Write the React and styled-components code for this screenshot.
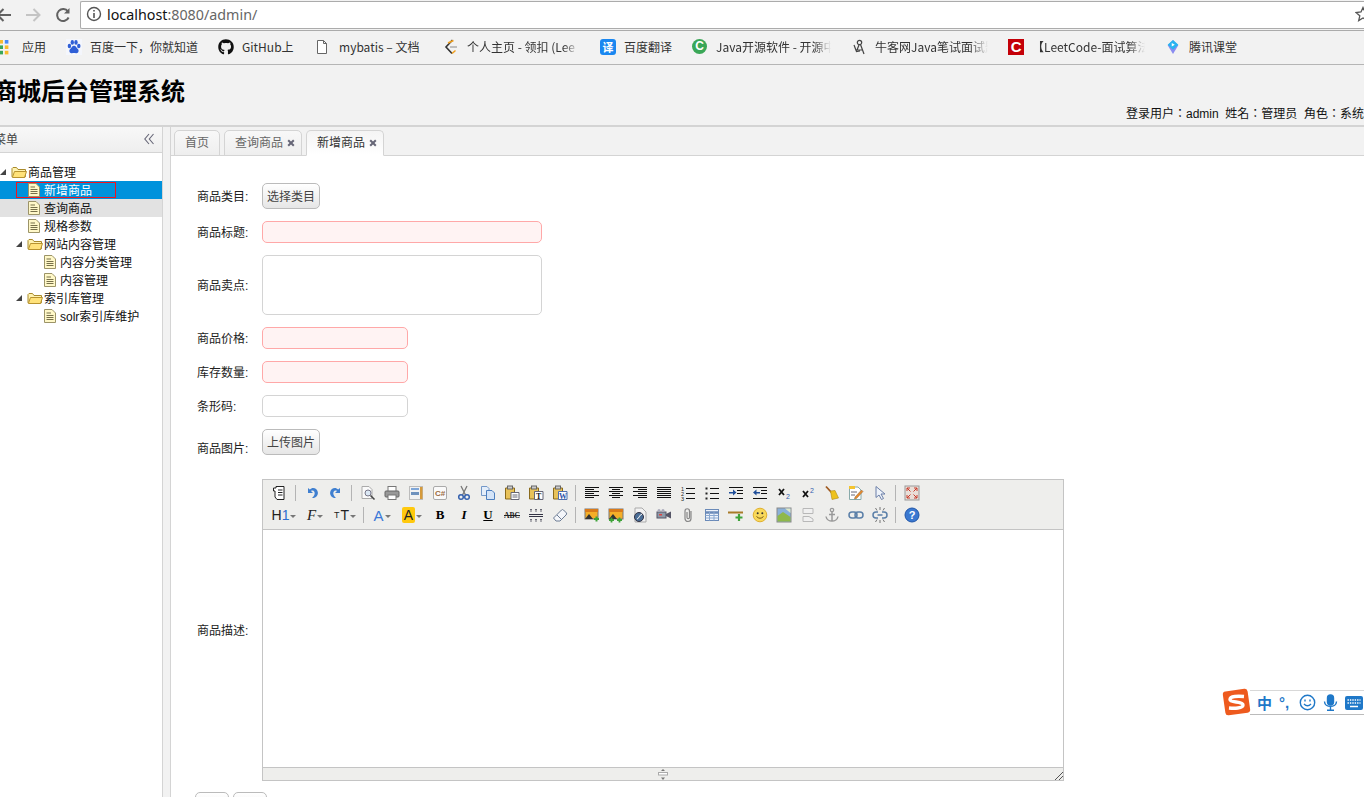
import React from 'react';
import styled, { createGlobalStyle } from 'styled-components';
import { FaGithub } from 'react-icons/fa';

const GlobalStyle = createGlobalStyle`
  html, body {
    margin: 0;
    padding: 0;
    background: #fff;
    overflow: hidden;
  }
  body {
    font-family: "Liberation Sans", "Noto Sans CJK SC", sans-serif;
    font-size: 12px;
    color: #000;
  }
  * { box-sizing: border-box; }
`;

const Page = styled.div`
  position: relative;
  width: 1364px;
  height: 797px;
  overflow: hidden;
  display: flex;
  flex-direction: column;
`;

/* browser chrome */
const NavBar = styled.div`
  height: 30px;
  background: #f2f2f2;
  display: flex;
  align-items: center;
  padding-bottom: 1px;
`;
const NavButton = styled.div`
  width: ${(p) => p.$w}px;
  margin-left: ${(p) => p.$ml || 0}px;
  height: 20px;
  display: flex;
  align-items: center;
  justify-content: center;
  flex: none;
`;
const UrlBox = styled.div`
  flex: 1;
  height: 28px;
  margin-left: 9px;
  margin-top: 1px;
  background: #fff;
  border: 1px solid #ababab;
  border-right: 0;
  border-radius: 2px 0 0 2px;
  display: flex;
  align-items: center;
  padding: 0 0 2px 5px;
  font-family: "Noto Sans", "Liberation Sans", sans-serif;
  font-size: 14.3px;
  color: #666;
`;
const Host = styled.span`
  color: #111;
  margin-left: 5px;
`;
const Star = styled.span`
  margin-left: auto;
  display: flex;
  margin-right: -7px;
`;
const Bookmarks = styled.div`
  height: 35px;
  background: #f2f2f2;
  border-top: 1px solid #ababab;
  border-bottom: 1px solid #b5b5b5;
  display: flex;
  align-items: center;
  gap: 20px;
  margin-left: -7px;
  padding-bottom: 2px;
  white-space: nowrap;
  color: #333;
  font-family: "Noto Sans CJK SC", sans-serif;
`;
const Bookmark = styled.div`
  display: flex;
  align-items: center;
  gap: 8px;
  flex: none;
`;
const BookmarkIcon = styled.span`
  width: ${(p) => p.$w || 16}px;
  height: 16px;
  display: flex;
  align-items: center;
  justify-content: flex-start;
  flex: none;
`;
const BookmarkText = styled.span`
  display: block;
  overflow: hidden;
  width: ${(p) => (p.$w ? `${p.$w}px` : 'auto')};
  ${(p) => p.$fade && `
    -webkit-mask-image: linear-gradient(to right, #000 85%, transparent 100%);
    mask-image: linear-gradient(to right, #000 85%, transparent 100%);
  `}
`;
const TranslateBadge = styled.span`
  width: 16px;
  height: 16px;
  border-radius: 3px;
  background: #1a87f0;
  color: #fff;
  font-size: 11px;
  font-weight: 700;
  line-height: 16px;
  text-align: center;
`;
const RedBadge = styled.span`
  width: 16px;
  height: 16px;
  background: #c40008;
  color: #fff;
  font-family: "Liberation Sans", sans-serif;
  font-size: 15px;
  font-weight: 700;
  line-height: 16px;
  text-align: center;
`;
const GreenBadge = styled.span`
  width: 15px;
  height: 15px;
  border-radius: 50%;
  background: #3aa757;
  color: #fff;
  font-family: "Liberation Sans", sans-serif;
  font-size: 12px;
  font-weight: 700;
  line-height: 15px;
  text-align: center;
`;

/* system header */
const Header = styled.header`
  height: 60px;
  background: #f2f2f2;
  flex: none;
`;
const Title = styled.h1`
  margin: 0 0 0 -7px;
  padding-top: 8px;
  font-size: 24px;
  line-height: 34px;
  font-weight: 700;
  color: #000;
  font-family: "Noto Sans CJK SC", sans-serif;
`;
const UserInfo = styled.div`
  margin: -1px 0 0 1126px;
  white-space: nowrap;
  line-height: 16px;
  color: #111;
  font-family: "Liberation Sans", "Noto Sans CJK TC", sans-serif;
`;

/* body */
const Body = styled.div`
  flex: 1;
  min-height: 0;
  display: flex;
  background: #f2f2f2;
  border-top: 2px solid #d4d4d4;
`;
const Side = styled.aside`
  width: 163px;
  flex: none;
  background: #fff;
  border-right: 1px solid #d4d4d4;
  overflow: hidden;
`;
const SideHead = styled.div`
  height: 26px;
  background: linear-gradient(#f8f8f8, #eee);
  border-bottom: 1px solid #d4d4d4;
  display: flex;
  align-items: center;
  justify-content: space-between;
  margin-left: -6px;
  padding: 0 8px 2px 0;
  color: #444;
`;
const Tree = styled.ul`
  list-style: none;
  margin: 0;
  padding: 10px 0 0;
`;
const TreeRow = styled.li`
  position: relative;
  height: 18px;
  display: flex;
  align-items: center;
  padding-left: ${(p) => p.$level * 16}px;
  line-height: 18px;
  white-space: nowrap;
  background: ${(p) => (p.$selected ? '#0092dc' : p.$hover ? '#e2e2e2' : 'transparent')};
  color: ${(p) => (p.$selected ? '#fff' : '#111')};
`;
const TreeArrow = styled.span`
  width: 11px;
  height: 16px;
  flex: none;
  display: flex;
  align-items: center;
`;
const TreeIcon = styled.span`
  width: 17px;
  height: 16px;
  flex: none;
  display: flex;
  align-items: center;
  padding-left: ${(p) => (p.$leaf ? 1 : 0)}px;
`;
const TreeText = styled.span`
  margin-top: 2px;
`;
const RedMark = styled.span`
  position: absolute;
  left: 16px;
  top: 1px;
  width: 100px;
  height: 16px;
  border: 1px solid #f0141e;
`;
const Main = styled.main`
  margin-left: 7px;
  flex: 1;
  min-width: 0;
  display: flex;
  flex-direction: column;
  border-left: 1px solid #d4d4d4;
`;
const TabBar = styled.div`
  height: 29px;
  flex: none;
  border-bottom: 1px solid #d4d4d4;
  display: flex;
  align-items: flex-end;
  gap: 4px;
  padding-left: 3px;
`;
const Tab = styled.div`
  height: 26px;
  margin-bottom: -1px;
  padding: 0 ${(p) => (p.$closable ? 6 : 10)}px 3px 10px;
  display: flex;
  align-items: center;
  gap: 4px;
  border: 1px solid #d4d4d4;
  border-radius: 5px 5px 0 0;
  background: ${(p) => (p.$active ? 'linear-gradient(#f4f4f4, #fff)' : 'linear-gradient(#f8f8f8, #eee)')};
  border-bottom-color: ${(p) => (p.$active ? '#fff' : '#d4d4d4')};
  color: ${(p) => (p.$active ? '#333' : '#666')};
`;
const Close = styled.span`
  width: 8px;
  display: flex;
  margin-top: 2px;
`;
const Content = styled.div`
  flex: 1;
  background: #fff;
  padding: 27px 0 0 26px;
  overflow: hidden;
`;
const Form = styled.form`
  display: flex;
  flex-direction: column;
  gap: 12px;
`;
const Row = styled.div`
  display: flex;
  align-items: ${(p) => p.$align || 'center'};
  margin-top: ${(p) => p.$mt || 0}px;
`;
const Label = styled.label`
  width: 65px;
  flex: none;
  color: #222;
  line-height: 16px;
  padding-top: ${(p) => p.$pt || 2}px;
`;
const Button = styled.button`
  height: 26px;
  padding: 0 4px 2px;
  border: 1px solid #bbb;
  border-radius: 5px;
  background: linear-gradient(#fff, #e6e6e6);
  font: inherit;
  color: #444;
`;
const Input = styled.div`
  width: ${(p) => p.$w}px;
  height: ${(p) => p.$h || 22}px;
  border: 1px solid ${(p) => (p.$invalid ? '#ffa8a8' : '#d4d4d4')};
  background: ${(p) => (p.$invalid ? '#fff3f3' : '#fff')};
  border-radius: 5px;
`;
const Editor = styled.div`
  width: 802px;
  height: 302px;
  border: 1px solid #c4c4c4;
  display: flex;
  flex-direction: column;
`;
const EditorTools = styled.div`
  height: 50px;
  flex: none;
  background: #eeeeec;
  border-bottom: 1px solid #c4c4c4;
  padding: 2px 0 0 5px;
  display: flex;
  flex-direction: column;
`;
const ToolRow = styled.div`
  height: 22px;
  display: flex;
  align-items: center;
`;
const Tool = styled.span`
  width: ${(p) => p.$w || 24}px;
  height: 22px;
  flex: none;
  display: flex;
  align-items: center;
  justify-content: center;
  gap: 1px;
  color: #222;
`;
const Sep = styled.span`
  width: 8px;
  height: 16px;
  flex: none;
  background: linear-gradient(#b4b4b4, #b4b4b4) 3px 0 / 1px 100% no-repeat;
`;
const Caret = styled.i`
  width: 0;
  height: 0;
  margin-top: 2px;
  border: 3px solid transparent;
  border-top: 3px solid #777;
  border-bottom: 0;
`;
const Glyph = styled.span`
  font-family: ${(p) => (p.$serif ? '"Liberation Serif", serif' : '"Liberation Sans", sans-serif')};
  font-size: ${(p) => p.$size || 14}px;
  font-weight: ${(p) => (p.$bold ? 700 : 400)};
  font-style: ${(p) => (p.$italic ? 'italic' : 'normal')};
  text-decoration: ${(p) => (p.$under ? 'underline' : 'none')};
  color: ${(p) => p.$color || '#222'};
  background: ${(p) => p.$bg || 'none'};
  border-radius: 2px;
  padding: ${(p) => (p.$bg ? '0 2px' : '0')};
  line-height: ${(p) => (p.$bg ? '16px' : 'normal')};
  white-space: nowrap;
`;
const EditArea = styled.div`
  flex: 1;
  background: #fff;
`;
const EditorFoot = styled.div`
  height: 13px;
  flex: none;
  background: #eeeeec;
  border-top: 1px solid #c4c4c4;
  position: relative;
  display: flex;
  justify-content: center;
  align-items: center;
`;
const ResizeCorner = styled.span`
  position: absolute;
  right: 0;
  bottom: 0;
  display: flex;
`;
const BottomButtons = styled.div`
  display: flex;
  gap: 4px;
  margin: -1px 0 0 -2px;
`;
const GhostButton = styled.button`
  width: 34px;
  height: 26px;
  border: 1px solid #bbb;
  border-radius: 5px;
  background: linear-gradient(#fff, #e6e6e6);
  padding: 0;
`;

/* input method widget, floats over the page */
const Ime = styled.div`
  position: absolute;
  right: 0;
  top: 688px;
  width: 142px;
  height: 28px;
`;
const ImeBar = styled.div`
  position: absolute;
  left: 28px;
  right: 0;
  top: 2px;
  height: 25px;
  background: #fff;
  border-top: 1px solid #d8d8d8;
  border-bottom: 1px solid #bbb;
  display: flex;
  align-items: center;
  padding-left: 7px;
  color: #1f78c8;
`;
const ImeChar = styled.span`
  font-family: "Noto Sans CJK SC", sans-serif;
  font-size: 15px;
  font-weight: 700;
  width: 22px;
`;
const ImePunct = styled.span`
  width: 20px;
  display: flex;
  font-size: 15px;
  font-weight: 700;
`;
const ImeGap = styled.span`
  width: 7px;
  flex: none;
`;
const ImeLogo = styled.span`
  position: absolute;
  left: 0;
  top: 0;
  display: flex;
`;

/* tree and chrome icons */
const FolderOpen = () => (
  <svg width="16" height="14" viewBox="0 0 16 14">
    <path d="M1 3.5 V11.5 Q1 12.5 2 12.5 H13 Q14.5 12.5 14.5 11 V4.5 H7 L5.5 2.5 H2 Z" fill="#fff3b0" stroke="#a98a2c" />
    <path d="M1.5 12 L3.5 6.5 H15.5 L13.5 12.5 H2 Z" fill="#ffe27a" stroke="#b8932f" />
  </svg>
);
const FileIcon = () => (
  <svg width="12" height="14" viewBox="0 0 12 14">
    <path d="M.5 .5 H8 L11.5 4 V13.5 H.5 Z" fill="#fff8c8" stroke="#9c9468" />
    <path d="M2.5 4 H7 M2.5 6.5 H9.5 M2.5 8.5 H9.5 M2.5 10.5 H9.5" stroke="#77704a" />
  </svg>
);
const Expander = () => (
  <svg width="6" height="6" viewBox="0 0 6 6">
    <path d="M0 6 L6 0 V6 Z" fill="#444" />
  </svg>
);
const Collapse = () => (
  <svg width="10" height="12" viewBox="0 0 10 12" fill="none" stroke="#667" strokeWidth="1.1">
    <path d="M5 1 L.8 6 L5 11 M9.5 1 L5.3 6 L9.5 11" />
  </svg>
);
const Back = () => (
  <svg width="20" height="16" viewBox="0 0 20 16" fill="none" stroke="#616161" strokeWidth="2">
    <path d="M16 8 H3 M8.5 2 L2.5 8 L8.5 14" />
  </svg>
);
const Forward = () => (
  <svg width="20" height="16" viewBox="0 0 20 16" fill="none" stroke="#c4c4c4" strokeWidth="2">
    <path d="M3 8 H16 M10.5 2 L16.5 8 L10.5 14" />
  </svg>
);
const Reload = () => (
  <svg width="16" height="16" viewBox="0 0 16 16" fill="none" stroke="#616161" strokeWidth="2">
    <path d="M13.6 10.5 A6 6 0 1 1 13 4.5" />
    <path d="M14.5 1 V6.5 H9 Z" fill="#616161" stroke="none" />
  </svg>
);
const InfoIcon = () => (
  <svg width="16" height="16" viewBox="0 0 16 16" fill="none" stroke="#555" strokeWidth="1.4">
    <circle cx="8" cy="8" r="6.5" />
    <path d="M8 7 V12 M8 4 V5.6" strokeWidth="1.6" />
  </svg>
);
const StarIcon = () => (
  <svg width="16" height="16" viewBox="0 0 16 16" fill="none" stroke="#555" strokeWidth="1.3">
    <path d="M8 1.5 L10 6 L15 6.5 L11.2 9.8 L12.3 14.6 L8 12 L3.7 14.6 L4.8 9.8 L1 6.5 L6 6 Z" />
  </svg>
);
const AppsIcon = () => {
  const colors = ['#e8453c', '#f9bb2d', '#4a8af4', '#e8453c', '#3aa757', '#f9bb2d', '#4a8af4', '#3aa757', '#f9bb2d'];
  return (
    <svg width="16" height="16" viewBox="0 0 16 16">
      {colors.map((c, i) => (
        <rect key={i} x={1 + (i % 3) * 5.4} y={1 + Math.floor(i / 3) * 5.4} width="3.6" height="3.6" fill={c} />
      ))}
    </svg>
  );
};
const BaiduIcon = () => (
  <svg width="16" height="16" viewBox="0 0 16 16" fill="#2f5fd6">
    <rect width="16" height="16" fill="#f4f6fc" />
    <ellipse cx="3.4" cy="7" rx="1.7" ry="2.2" />
    <ellipse cx="6.3" cy="3.4" rx="1.7" ry="2.3" />
    <ellipse cx="10" cy="3.4" rx="1.7" ry="2.3" />
    <ellipse cx="12.8" cy="7" rx="1.7" ry="2.2" />
    <path d="M8 6.8 C6 6.8 5.6 9 4.2 10 C2.6 11.2 3.4 14.6 6 14.2 C7.2 14 8.8 14 10 14.2 C12.6 14.6 13.4 11.2 11.8 10 C10.4 9 10 6.8 8 6.8 Z" />
  </svg>
);
const PageIcon = () => (
  <svg width="14" height="16" viewBox="0 0 14 16" fill="#fff" stroke="#666">
    <path d="M2.5 1.5 H8.5 L11.5 4.5 V14.5 H2.5 Z M8.5 1.5 V4.5 H11.5" />
  </svg>
);
const LeetIcon = () => (
  <svg width="16" height="16" viewBox="0 0 16 16" fill="none">
    <path d="M9.5 1 L3 8 L9 14.5" stroke="#333" strokeWidth="1.6" />
    <path d="M5 4 L10.5 1.5" stroke="#f0a020" strokeWidth="1.6" />
    <path d="M7 8 H14" stroke="#b0b0b0" strokeWidth="1.6" />
    <path d="M9 14.5 L12.5 11.5" stroke="#f0a020" strokeWidth="1.6" />
  </svg>
);
const NowcoderIcon = () => (
  <svg width="16" height="16" viewBox="0 0 16 16" fill="none" stroke="#444" strokeWidth="1.2">
    <circle cx="8.5" cy="3.5" r="2.2" />
    <path d="M9.5 5.5 L13 15 M8 6 L6 11 H11 M3 6 L5.5 12.5 L9 12" />
  </svg>
);
const TencentIcon = () => (
  <svg width="18" height="18" viewBox="0 0 18 18">
    <path d="M9 1 L15 7 L9 17 L3 7 Z" fill="#8a8cf0" />
    <path d="M9 1 L15 6.5 L9 12 L3 6.5 Z" fill="#28b4f0" />
    <path d="M7.6 4.5 L11 6.5 L7.6 8.5 Z" fill="#fff" />
  </svg>
);
const SogouLogo = () => (
  <svg width="30" height="28" viewBox="0 0 30 28">
    <rect x="2" y="2" width="25" height="24" rx="3" fill="#ee5a1e" transform="rotate(-8 15 14)" />
    <path d="M22 8.5 C16 8 8 8 8 11.5 C8 15 21 13 21 17 C21 20.5 12 20.5 7 20" fill="none" stroke="#fff" strokeWidth="3.4" />
  </svg>
);
const SmileOutline = () => (
  <svg width="17" height="17" viewBox="0 0 17 17" fill="none" stroke="#1f78c8" strokeWidth="1.4">
    <circle cx="8.5" cy="8.5" r="7.2" />
    <path d="M5 10 Q8.5 13.5 12 10" />
    <path d="M6 5.5 V7.5 M11 5.5 V7.5" />
  </svg>
);
const Mic = () => (
  <svg width="15" height="17" viewBox="0 0 15 17" fill="none" stroke="#1f78c8" strokeWidth="1.4">
    <rect x="4.5" y="1" width="6" height="10" rx="3" fill="#1f78c8" />
    <path d="M1.5 7.5 C1.5 14 13.5 14 13.5 7.5 M7.5 12 V16 M4 16.2 H11" />
  </svg>
);
const KeyboardIcon = () => (
  <svg width="18" height="14" viewBox="0 0 18 14">
    <rect width="18" height="14" rx="2" fill="#1f78c8" />
    <path d="M2.5 4 H15.5 M2.5 7 H15.5" stroke="#fff" strokeWidth="1.5" strokeDasharray="1.4 1" />
    <path d="M5 10.5 H13" stroke="#fff" strokeWidth="1.5" />
  </svg>
);
const CloseIcon = () => (
  <svg width="8" height="8" viewBox="0 0 8 8" stroke="#667" strokeWidth="2">
    <path d="M1.2 1.2 L6.8 6.8 M6.8 1.2 L1.2 6.8" />
  </svg>
);

/* editor toolbar icons */
const Ico = ({ children }) => (
  <svg width="16" height="16" viewBox="0 0 16 16" fill="none">{children}</svg>
);
const lines = (rows) => rows.map(([x1, x2, y], i) => (
  <path key={i} d={`M${x1} ${y + 0.5} H${x2}`} stroke="#111" />
));
const alignRows = {
  left: [[1, 15, 2], [1, 10, 4], [1, 15, 6], [1, 10, 8], [1, 15, 10], [1, 10, 12]],
  center: [[1, 15, 2], [4, 12, 4], [1, 15, 6], [4, 12, 8], [1, 15, 10], [4, 12, 12]],
  right: [[1, 15, 2], [6, 15, 4], [1, 15, 6], [6, 15, 8], [1, 15, 10], [6, 15, 12]],
  justify: [2, 4, 6, 8, 10, 12].map((y) => [1, 15, y]),
};
const Clip = ({ children }) => (
  <>
    <path d="M1.5 3 H10.5 V14 H1.5 Z" fill="#e8c25a" stroke="#8a6a1c" />
    <rect x="3.5" y="1" width="5" height="3" fill="#ccc" stroke="#666" />
    {children}
  </>
);
const icons = {
  source: <Ico><path d="M4 1.5 H12 V14.5 H5 L3 12 V6 H1.5 V3 H4 Z" fill="#fff" stroke="#222" /><path d="M6 5 H10.5 M6 7.5 H10.5 M6 10 H10.5" stroke="#222" /></Ico>,
  undo: <Ico><path d="M4 3 V8 H9 L7 6 C9 4.5 11.5 6.5 10.5 9.5 C10 11 9 12 8 13 C11.5 13.5 14.5 10.5 13.8 7 C13 3 8.5 1.5 5.8 4.5 Z" fill="#3f7fd0" /></Ico>,
  redo: <Ico><path d="M12 3 V8 H7 L9 6 C7 4.5 4.5 6.5 5.5 9.5 C6 11 7 12 8 13 C4.5 13.5 1.5 10.5 2.2 7 C3 3 7.5 1.5 10.2 4.5 Z" fill="#3f7fd0" /></Ico>,
  preview: <Ico><path d="M2 1.5 H9 L12 4.5 V13.5 H2 Z" fill="#fafafa" stroke="#aaa" /><circle cx="8" cy="8" r="3" fill="#dbe8f5" stroke="#778" /><path d="M10.5 10.5 L14.5 14.5" stroke="#444" strokeWidth="1.6" /></Ico>,
  print: <Ico><rect x="4" y="1.5" width="8" height="5" fill="#fff" stroke="#777" /><rect x="1" y="6" width="14" height="6" rx="1" fill="#999" stroke="#666" /><rect x="4" y="10" width="8" height="4.5" fill="#fff" stroke="#777" /></Ico>,
  template: <Ico><rect x="1.5" y="1.5" width="13" height="13" fill="#f2f2f2" stroke="#888" strokeDasharray="1 1" /><rect x="3" y="3" width="8" height="2" fill="#7ea6d8" /><rect x="3" y="7" width="8" height="3" fill="#6f92bd" /><rect x="12" y="2" width="2.5" height="12" fill="#d59a3a" /></Ico>,
  code: <Ico><rect x="1.5" y="1.5" width="13" height="13" rx="1.5" fill="#fafafa" stroke="#aaa" /><text x="3" y="11" fontSize="8" fontWeight="700" fontFamily="Liberation Sans" fill="#9a6a3c">C#</text></Ico>,
  cut: <Ico><path d="M5 1 L9.5 10 M11 1 L6.5 10" stroke="#777" strokeWidth="1.3" /><circle cx="5" cy="12" r="2.3" stroke="#3561ae" strokeWidth="1.5" /><circle cx="11" cy="12" r="2.3" stroke="#3561ae" strokeWidth="1.5" /></Ico>,
  copy: <Ico><path d="M1.5 1.5 H7 L9 3.5 V10.5 H1.5 Z" fill="#e4eefa" stroke="#7498c8" /><path d="M6.5 5.5 H12 L14.5 8 V14.5 H6.5 Z" fill="#d4e4f8" stroke="#4d7fbf" /></Ico>,
  paste: <Ico><Clip><path d="M7 7.5 H15 V14.5 H7 Z" fill="#fff" stroke="#667" /><path d="M8.5 10 H13.5 M8.5 12 H13.5" stroke="#667" /></Clip></Ico>,
  pasteText: <Ico><Clip><path d="M6.5 6.5 H15 V14.5 H6.5 Z" fill="#fff" stroke="#667" /><text x="8" y="13.5" fontSize="8" fontWeight="700" fontFamily="Liberation Serif" fill="#222">T</text></Clip></Ico>,
  pasteWord: <Ico><Clip><path d="M6.5 6.5 H15 V14.5 H6.5 Z" fill="#fff" stroke="#4f6fb0" /><text x="7" y="13.5" fontSize="8" fontWeight="700" fontFamily="Liberation Serif" fill="#2f55a8">W</text></Clip></Ico>,
  left: <Ico>{lines(alignRows.left)}</Ico>,
  center: <Ico>{lines(alignRows.center)}</Ico>,
  right: <Ico>{lines(alignRows.right)}</Ico>,
  justify: <Ico>{lines(alignRows.justify)}</Ico>,
  ol: <Ico>{lines([[6, 15, 3], [6, 15, 8], [6, 15, 13]])}<text x="1" y="6" fontSize="5.5" fontFamily="Liberation Sans" fill="#222">1</text><text x="1" y="10.5" fontSize="5.5" fontFamily="Liberation Sans" fill="#222">2</text><text x="1" y="15.5" fontSize="5.5" fontFamily="Liberation Sans" fill="#222">3</text></Ico>,
  ul: <Ico>{lines([[6, 15, 3], [6, 15, 8], [6, 15, 13]])}<rect x="1.5" y="2.5" width="2" height="2" fill="#222" /><rect x="1.5" y="7.5" width="2" height="2" fill="#222" /><rect x="1.5" y="12.5" width="2" height="2" fill="#222" /></Ico>,
  indent: <Ico>{lines([[1, 15, 2], [9, 15, 5], [9, 15, 8], [1, 15, 13]])}<path d="M1 7 H5 V4.5 L8.5 7.5 L5 10.5 V8.5 H1 Z" fill="#1f4e99" /></Ico>,
  outdent: <Ico>{lines([[1, 15, 2], [9, 15, 5], [9, 15, 8], [1, 15, 13]])}<path d="M8 7 H4.5 V4.5 L1 7.5 L4.5 10.5 V8.5 H8 Z" fill="#1f4e99" /></Ico>,
  sub: <Ico><path d="M3 4 L8 10 M8 4 L3 10" stroke="#111" strokeWidth="1.8" /><text x="10" y="14" fontSize="7" fontFamily="Liberation Sans" fill="#3561ae">2</text></Ico>,
  sup: <Ico><path d="M3 6 L8 12 M8 6 L3 12" stroke="#111" strokeWidth="1.8" /><text x="10" y="8" fontSize="7" fontFamily="Liberation Sans" fill="#3561ae">2</text></Ico>,
  broom: <Ico><path d="M2 1.5 L7.5 7.5" stroke="#a05a20" strokeWidth="1.8" /><path d="M6.5 6 L11 5.5 L14.5 13 L8 14.5 Z" fill="#eec21c" stroke="#b08a10" strokeWidth=".6" /></Ico>,
  typeset: <Ico><path d="M1.5 2 H10 L13 5 V14.5 H1.5 Z" fill="#fff" stroke="#8aa" /><path d="M1 1 H7 V4 H1 Z" fill="#f4c430" /><path d="M3 7 H9 M3 10 H7" stroke="#667" /><path d="M7 12 L13.5 5 L15 6.5 L8.5 13.5 L6.5 14 Z" fill="#e88a2a" stroke="#864" strokeWidth=".5" /></Ico>,
  select: <Ico><path d="M4 1.5 V12.5 L7 10 L9.5 14.5 L11.5 13.5 L9 9 H13 Z" fill="#eef3fa" stroke="#6b7fa8" /></Ico>,
  fullscreen: <Ico><rect x="1" y="1" width="14" height="14" fill="#eadfd8" stroke="#999" /><path d="M3 3 L6.5 6.5 M3 3 H6 M3 3 V6 M13 3 L9.5 6.5 M13 3 H10 M13 3 V6 M3 13 L6.5 9.5 M3 13 H6 M3 13 V10 M13 13 L9.5 9.5 M13 13 H10 M13 13 V10" stroke="#c83a2a" /></Ico>,
  strike: <Ico><text x="0" y="11" fontSize="7.5" fontFamily="Liberation Serif" fontWeight="700" fill="#222">ABC</text><path d="M0 8.5 H16" stroke="#222" /></Ico>,
  hrDots: <Ico><path d="M1 7.5 H15 M1 9.5 H15" stroke="#334" /><path d="M3 2 V5 M8 2 V5 M13 2 V5 M3 12 V15 M8 12 V15 M13 12 V15" stroke="#334" strokeWidth="1.4" strokeDasharray="1 .5" /></Ico>,
  eraser: <Ico><path d="M1.5 11 L9.5 3 Q10.5 2 11.5 3 L14.5 6 Q15 7 14 8 L8 14 H4 Z" fill="#f4f6fa" stroke="#6c7c94" /><path d="M5 8 L10 13" stroke="#6c7c94" /></Ico>,
  image: <Ico><rect x="1" y="2" width="13" height="10" fill="#f5ae28" stroke="#777" /><rect x="1" y="2" width="13" height="3" fill="#d97a1a" /><path d="M1 12 L5 7 L9 12 Z" fill="#333" /><path d="M10 12 H15 M12.5 9.5 V14.5" stroke="#3fa33a" strokeWidth="2" /></Ico>,
  images: <Ico><rect x="1" y="2" width="14" height="10" fill="#f5ae28" stroke="#777" /><rect x="1" y="2" width="14" height="3" fill="#d97a1a" /><path d="M1 12 L5 7 L9 12 Z" fill="#333" /><path d="M1 13 H6 M3.5 10.5 V15.5 M9 13 H14 M11.5 10.5 V15.5" stroke="#3fa33a" strokeWidth="1.8" /></Ico>,
  flash: <Ico><path d="M3 1 H10 L14 5 V15 H3 Z" fill="#f2f2f2" stroke="#aaa" /><circle cx="7" cy="10" r="4.5" fill="#4a6e96" stroke="#334" /><path d="M5 12 C7 12 7 8 10 7" stroke="#fff" /></Ico>,
  video: <Ico><rect x="1" y="5" width="9" height="6" fill="#8e9aa8" stroke="#556" /><circle cx="3" cy="3.5" r="1.5" fill="#aab" /><circle cx="7" cy="3.5" r="1.5" fill="#aab" /><path d="M10 7 L15 4.5 V11.5 L10 9 Z" fill="#556" /><rect x="3" y="7" width="3" height="1.5" fill="#d44" /></Ico>,
  attach: <Ico><path d="M11 4 V11.5 C11 15.5 5 15.5 5 11.5 V4 C5 1 9.5 1 9.5 4 V10.5 C9.5 12 7 12 7 10.5 V5" stroke="#888" strokeWidth="1.2" /></Ico>,
  table: <Ico><rect x="1.5" y="2.5" width="13" height="11" fill="#eef3fb" stroke="#6a8ab8" /><path d="M1.5 5.5 H14.5" stroke="#6a8ab8" strokeWidth="2.5" /><path d="M1.5 8.5 H14.5 M1.5 11 H14.5 M5.5 5 V13.5 M10 5 V13.5" stroke="#8aa8d0" /></Ico>,
  hr: <Ico><path d="M0 5.5 H15" stroke="#a87a28" strokeWidth="2" /><path d="M7.5 10.5 H14.5 M11 7 V14" stroke="#3fa33a" strokeWidth="2.2" /></Ico>,
  emoji: <Ico><circle cx="8" cy="8" r="6.8" fill="#f8d85a" stroke="#e0b030" /><circle cx="5.7" cy="6.2" r="1" fill="#333" /><circle cx="10.3" cy="6.2" r="1" fill="#333" /><path d="M4.5 9.5 Q8 13 11.5 9.5" stroke="#7a5a10" /></Ico>,
  map: <Ico><rect x="1" y="1" width="14" height="14" fill="#8ab0d8" stroke="#888" /><path d="M1.5 14.5 V9 L7 5 L14.5 10 V14.5 Z" fill="#8fb84a" /><path d="M9 1.5 H14.5 V6 Z" fill="#dfe8c8" /></Ico>,
  pagebreak: <Ico><path d="M3 1.5 H13 V6.5 H3 Z M3 9.5 H9 L13 12 V14.5 H3 Z" fill="#f0f0f0" stroke="#b8b8b8" /></Ico>,
  anchor: <Ico><circle cx="8" cy="3" r="1.7" stroke="#999" strokeWidth="1.2" /><path d="M8 5 V14 M5 7.5 H11 M2 9.5 C2.5 12.5 5.5 14 8 14 C10.5 14 13.5 12.5 14 9.5" stroke="#999" strokeWidth="1.5" /></Ico>,
  link: <Ico><rect x="1" y="5" width="8" height="6" rx="3" stroke="#5a7fa8" strokeWidth="1.5" /><rect x="7" y="5" width="8" height="6" rx="3" stroke="#5a7fa8" strokeWidth="1.5" /></Ico>,
  unlink: <Ico><path d="M6 5 H4 A3 3 0 0 0 4 11 H6 M10 5 H12 A3 3 0 0 1 12 11 H10 M5.5 8 H10.5" stroke="#5a7fa8" strokeWidth="1.5" /><path d="M8 0 V3 M8 13 V16 M3.5 1 L5 3.5 M12.5 1 L11 3.5 M3.5 15 L5 12.5 M12.5 15 L11 12.5" stroke="#777" /></Ico>,
  help: <Ico><circle cx="8" cy="8" r="7" fill="#3a78d0" stroke="#1f55a8" /><text x="4.8" y="12" fontSize="11" fontWeight="700" fontFamily="Liberation Sans" fill="#fff">?</text></Ico>,
};

const group = (names) => names.map((n) => <Tool key={n}>{icons[n]}</Tool>);

const bookmarks = [
  { icon: <AppsIcon />, iconW: 21, text: '应用' },
  { icon: <BaiduIcon />, text: '百度一下，你就知道' },
  { icon: <FaGithub size={16} color="#111" />, text: 'GitHub上', w: 53 },
  { icon: <PageIcon />, text: 'mybatis – 文档', w: 84 },
  { icon: <LeetIcon />, text: '个人主页 - 领扣 (Lee', w: 113, fade: true },
  { icon: <TranslateBadge>译</TranslateBadge>, text: '百度翻译' },
  { icon: <GreenBadge>C</GreenBadge>, text: 'Java开源软件 - 开源中', w: 115, fade: true },
  { icon: <NowcoderIcon />, text: '牛客网Java笔试面试题', w: 113, fade: true },
  { icon: <RedBadge>C</RedBadge>, text: '【LeetCode-面试算法', w: 113, fade: true },
  { icon: <TencentIcon />, text: '腾讯课堂' },
];

const menu = [
  { level: 0, text: '商品管理', folder: true },
  { level: 1, text: '新增商品', selected: true },
  { level: 1, text: '查询商品', hover: true },
  { level: 1, text: '规格参数' },
  { level: 1, text: '网站内容管理', folder: true },
  { level: 2, text: '内容分类管理' },
  { level: 2, text: '内容管理' },
  { level: 1, text: '索引库管理', folder: true },
  { level: 2, text: 'solr索引库维护' },
];

const App = () => (
  <Page>
    <GlobalStyle />
    <NavBar>
      <NavButton $w={20} $ml={-5}><Back /></NavButton>
      <NavButton $w={20} $ml={8}><Forward /></NavButton>
      <NavButton $w={16} $ml={12}><Reload /></NavButton>
      <UrlBox>
        <InfoIcon />
        <Host>localhost</Host>:8080/admin/
        <Star><StarIcon /></Star>
      </UrlBox>
    </NavBar>
    <Bookmarks>
      {bookmarks.map((b) => (
        <Bookmark key={b.text}>
          <BookmarkIcon $w={b.iconW}>{b.icon}</BookmarkIcon>
          <BookmarkText $w={b.w} $fade={b.fade}>{b.text}</BookmarkText>
        </Bookmark>
      ))}
    </Bookmarks>
    <Header>
      <Title>商城后台管理系统</Title>
      <UserInfo>登录用户：admin&nbsp;&nbsp;姓名：管理员&nbsp;&nbsp;角色：系统</UserInfo>
    </Header>
    <Body>
      <Side>
        <SideHead>
          <span>菜单</span>
          <Collapse />
        </SideHead>
        <Tree>
          {menu.map((m) => (
            <TreeRow key={m.text} $level={m.level} $selected={m.selected} $hover={m.hover}>
              <TreeArrow>{m.folder && <Expander />}</TreeArrow>
              <TreeIcon $leaf={!m.folder}>{m.folder ? <FolderOpen /> : <FileIcon />}</TreeIcon>
              <TreeText>{m.text}</TreeText>
              {m.selected && <RedMark />}
            </TreeRow>
          ))}
        </Tree>
      </Side>
      <Main>
        <TabBar>
          <Tab>首页</Tab>
          <Tab $closable>查询商品<Close><CloseIcon /></Close></Tab>
          <Tab $closable $active>新增商品<Close><CloseIcon /></Close></Tab>
        </TabBar>
        <Content>
          <Form>
            <Row>
              <Label>商品类目:</Label>
              <Button type="button">选择类目</Button>
            </Row>
            <Row>
              <Label>商品标题:</Label>
              <Input $w={280} $invalid />
            </Row>
            <Row>
              <Label>商品卖点:</Label>
              <Input $w={280} $h={60} />
            </Row>
            <Row>
              <Label>商品价格:</Label>
              <Input $w={146} $invalid />
            </Row>
            <Row>
              <Label>库存数量:</Label>
              <Input $w={146} $invalid />
            </Row>
            <Row>
              <Label>条形码:</Label>
              <Input $w={146} />
            </Row>
            <Row $align="flex-start">
              <Label $pt={12}>商品图片:</Label>
              <Button type="button">上传图片</Button>
            </Row>
            <Row $mt={10}>
              <Label>商品描述:</Label>
              <Editor>
                <EditorTools>
                  <ToolRow>
                    {group(['source'])}
                    <Sep />
                    {group(['undo', 'redo'])}
                    <Sep />
                    {group(['preview', 'print', 'template', 'code', 'cut', 'copy', 'paste', 'pasteText', 'pasteWord'])}
                    <Sep />
                    {group(['left', 'center', 'right', 'justify', 'ol', 'ul', 'indent', 'outdent', 'sub', 'sup', 'broom', 'typeset', 'select'])}
                    <Sep />
                    {group(['fullscreen'])}
                  </ToolRow>
                  <ToolRow>
                    <Tool $w={32}><Glyph $size={14}>H<Glyph $size={14} $color="#2f6fd0">1</Glyph></Glyph><Caret /></Tool>
                    <Tool $w={30}><Glyph $serif $italic $size={15}>F</Glyph><Caret /></Tool>
                    <Tool $w={30}><Glyph $size={9}>T</Glyph><Glyph $size={14}>T</Glyph><Caret /></Tool>
                    <Sep />
                    <Tool $w={28}><Glyph $size={15} $color="#3a78d8">A</Glyph><Caret /></Tool>
                    <Tool $w={32}><Glyph $size={14} $bg="#ffc90e">A</Glyph><Caret /></Tool>
                    <Tool><Glyph $serif $bold $size={13} $color="#000">B</Glyph></Tool>
                    <Tool><Glyph $serif $bold $italic $size={13} $color="#000">I</Glyph></Tool>
                    <Tool><Glyph $serif $bold $under $size={13} $color="#000">U</Glyph></Tool>
                    <Tool>{icons.strike}</Tool>
                    <Tool>{icons.hrDots}</Tool>
                    <Tool>{icons.eraser}</Tool>
                    <Sep />
                    {group(['image', 'images', 'flash', 'video', 'attach', 'table', 'hr', 'emoji', 'map', 'pagebreak', 'anchor', 'link', 'unlink'])}
                    <Sep />
                    {group(['help'])}
                  </ToolRow>
                </EditorTools>
                <EditArea />
                <EditorFoot>
                  <svg width="14" height="11" viewBox="0 0 14 11">
                    <path d="M7 0 L9 2 H5 Z M7 11 L5 8.5 H9 Z" fill="#777" />
                    <rect x="2.5" y="3.5" width="9" height="2.5" fill="#fff" stroke="#aaa" />
                  </svg>
                  <ResizeCorner>
                    <svg width="8" height="9" viewBox="0 0 8 9" stroke="#555">
                      <path d="M0 9 L8 1 M4 9 L8 5" />
                    </svg>
                  </ResizeCorner>
                </EditorFoot>
              </Editor>
            </Row>
            <BottomButtons>
              <GhostButton type="button" />
              <GhostButton type="button" />
            </BottomButtons>
          </Form>
        </Content>
      </Main>
    </Body>
    <Ime>
      <ImeBar>
        <ImeChar>中</ImeChar>
        <ImePunct>°,</ImePunct>
        <SmileOutline />
        <ImeGap />
        <Mic />
        <ImeGap />
        <KeyboardIcon />
      </ImeBar>
      <ImeLogo><SogouLogo /></ImeLogo>
    </Ime>
  </Page>
);

export default App;
